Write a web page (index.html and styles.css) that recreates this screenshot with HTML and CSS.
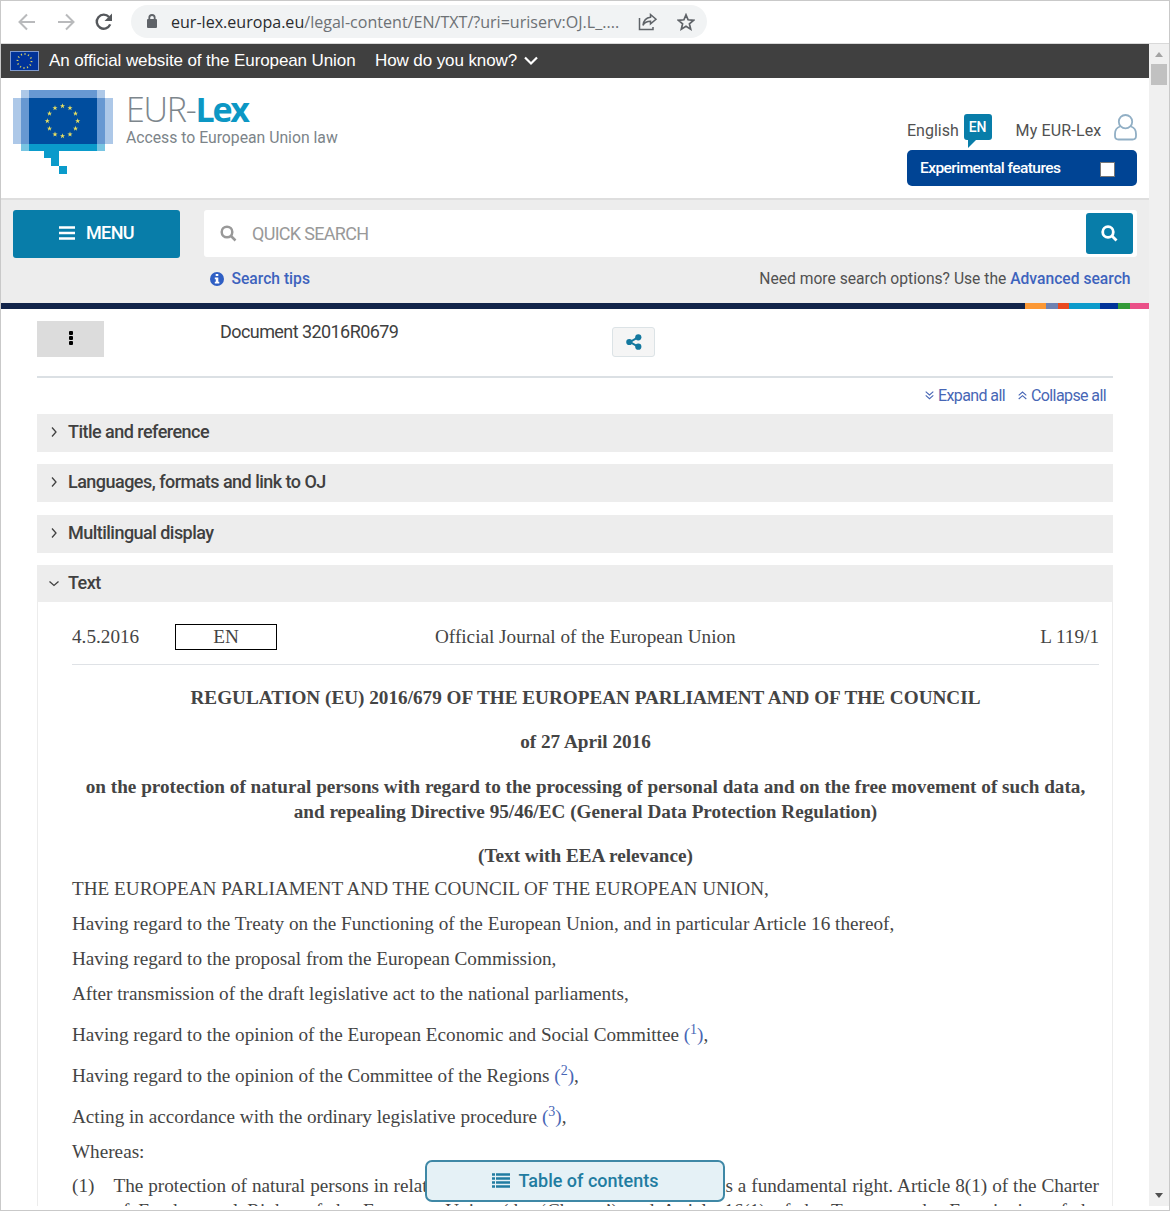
FILE: index.html
```html
<!DOCTYPE html>
<html lang="en">
<head>
<meta charset="utf-8">
<title>EUR-Lex - 32016R0679 - EN</title>
<link rel="stylesheet" href="styles.css">
</head>
<body>
<div class="window">
  <div class="toolbar">
    <svg class="nav back" width="20" height="20" viewBox="0 0 20 20"><path d="M18 10H3M10 2.500 2.500 10l7.500 7.500"/></svg>
    <svg class="nav fwd" width="20" height="20" viewBox="0 0 20 20"><path d="M2 10h15M10 2.500 17.500 10 10 17.500"/></svg>
    <svg class="reload" width="20" height="20" viewBox="0 0 20 20"><path class="arc" d="M16.200 12.400A7 7 0 1 1 15 5"/><path class="head" d="M18 1.500V9h-7.500z"/></svg>
    <div class="address">
      <svg class="lock" width="12" height="15" viewBox="0 0 12 15"><rect x="1" y="5" width="10" height="9" rx="1"/><path d="M3.300 6V3.700a2.700 2.700 0 0 1 5.400 0V6"/></svg>
      <span class="url"><b>eur-lex.europa.eu</b>/legal-content/EN/TXT/?uri=uriserv:OJ.L_....</span>
      <svg class="share-out" width="20" height="18" viewBox="0 0 20 18"><path d="M1.500 5v11.500h13.500v-2.500M12.500 1.500l5.500 4.700-5.500 4.700V8.300c-4 0-6 1.200-7.500 4 .5-4 3-7.500 7.500-8z"/></svg>
      <svg class="star" width="18" height="18" viewBox="0 0 18 18"><path d="M9 1.800l2.100 5 5.400.5-4.100 3.500 1.300 5.400L9 13.300l-4.700 2.900 1.300-5.400-4.100-3.500 5.400-.5z"/></svg>
    </div>
  </div>
  <div class="viewport">
    <div class="page">
      <div class="globan">
        <svg class="flag" width="29" height="20" viewBox="0 0 29 20"><rect x=".5" y=".5" width="28" height="19" fill="#039" stroke="#7f99cc"/><circle class="dots" cx="14.500" cy="10" r="7" pathLength="120"/></svg>
        <span class="official">An official website of the European Union</span>
        <span class="know">How do you know?</span>
        <svg class="chev" width="14" height="10" viewBox="0 0 14 10"><path d="M1 1.500 7 7.500l6-6"/></svg>
      </div>
      <header class="header">
        <svg class="logo" width="100" height="86" viewBox="0 0 100 86">
          <defs><path id="s" fill="#e9e060" d="M0-2.700.65-.85 2.600-.8 1.050.35 1.600 2.200 0 1.100-1.600 2.200-1.050.35-2.600-.8-.65-.85z"/></defs>
          <path fill="#adc8e8" d="M0 8h8v46H0zM92 8h8v46h-8zM8 0h8v8H8zM84 0h8v8h-8z"/>
          <path fill="#6798d2" d="M16 0h68v8H16zM8 8h8v46H8zM84 8h8v46h-8z"/>
          <path fill="#004d9e" d="M16 8h68v46H16z"/>
          <path fill="#0a9bcb" d="M15 54h69v7H46v15h-8v-8h-7v-7H15zM46 76h8v8h-8z"/>
          <path fill="#78c5e2" d="M8 54h8v7H8zM84 54h8v7h-8z"/>
          <use href="#s" x="49.500" y="16"/><use href="#s" x="57" y="18"/><use href="#s" x="62.500" y="23.500"/><use href="#s" x="64.700" y="31"/><use href="#s" x="62.500" y="38.500"/><use href="#s" x="57" y="44.300"/><use href="#s" x="49.500" y="46"/><use href="#s" x="42" y="44.300"/><use href="#s" x="36.500" y="38.500"/><use href="#s" x="34.300" y="31"/><use href="#s" x="36.500" y="23.500"/><use href="#s" x="42" y="18"/>
        </svg>
        <div class="brand">
          <div class="name">EUR-<b>Lex</b></div>
          <div class="tagline">Access to European Union law</div>
        </div>
        <div class="account">
          <div class="links">
            <span class="english">English</span>
            <span class="lang"><svg width="28" height="34" viewBox="0 0 28 34"><path d="M3 0h22a3 3 0 0 1 3 3v20a3 3 0 0 1-3 3H12l-8 8v-8H3a3 3 0 0 1-3-3V3a3 3 0 0 1 3-3z"/></svg><i>EN</i></span>
            <span class="my">My EUR-Lex</span>
            <svg class="user" width="23" height="27" viewBox="0 0 23 27"><circle cx="11.500" cy="7.700" r="6.700"/><path d="M6 12.500c-3.500 1-5 3.500-5 7.500v2c0 2.500 1 3.500 3.500 3.500h14c2.500 0 3.500-1 3.500-3.500v-2c0-4-1.500-6.500-5-7.500"/></svg>
          </div>
          <div class="experimental"><span>Experimental features</span><i class="check"></i></div>
        </div>
      </header>
      <section class="search">
        <div class="menu"><svg width="16" height="14" viewBox="0 0 16 14"><path d="M0 1.500h16M0 7h16M0 12.500h16"/></svg><span>MENU</span></div>
        <div class="search-col">
          <div class="field">
            <svg class="glass" width="17" height="17" viewBox="0 0 17 17"><circle cx="7" cy="7" r="5.300"/><path d="M11 11l4.500 4.500"/></svg>
            <span>QUICK SEARCH</span>
            <div class="go"><svg class="glass" width="17" height="17" viewBox="0 0 17 17"><circle cx="7" cy="7" r="5.300"/><path d="M11 11l4.500 4.500"/></svg></div>
          </div>
          <div class="hints">
            <svg width="14" height="14" viewBox="0 0 14 14"><circle cx="7" cy="7" r="7" fill="#2f5fc4"/><path fill="#fff" d="M5.700 2h2.600v2H5.700zM4.800 5.500h3.500v4.300h1V11.500H4.800V9.800h1V7.200h-1z"/></svg>
            <span class="tips">Search tips</span>
            <span class="need">Need more search options? Use the <b>Advanced search</b></span>
          </div>
        </div>
      </section>
      <div class="band"><i class="c1"></i><i class="c2"></i><i class="c3"></i><i class="c4"></i><i class="c5"></i><i class="c6"></i><i class="c7"></i></div>
      <main class="main">
        <div class="dochead">
          <div class="more"><i></i><i></i><i></i></div>
          <span class="docname">Document 32016R0679</span>
          <div class="share"><svg width="16" height="16" viewBox="0 0 16 16"><path d="M12 3.300 4 8l8 4.700"/><circle cx="3.300" cy="8" r="3.100"/><circle cx="12.300" cy="3.300" r="3.100"/><circle cx="12.300" cy="12.700" r="3.100"/></svg></div>
        </div>
        <div class="toggles">
          <svg width="9" height="9" viewBox="0 0 9 9"><path d="M.7.700 4.500 4 8.300.700M.7 4.400l3.800 3.300 3.800-3.300"/></svg><span class="exp">Expand all</span>
          <svg width="9" height="9" viewBox="0 0 9 9"><path d="M.7 4.300 4.500 1l3.800 3.300M.7 8l3.800-3.300L8.300 8"/></svg><span class="col">Collapse all</span>
        </div>
        <div class="panel"><svg width="12" height="12" viewBox="0 0 12 12"><path d="M4 1.500 8 6l-4 4.500"/></svg><span>Title and reference</span></div>
        <div class="panel"><svg width="12" height="12" viewBox="0 0 12 12"><path d="M4 1.500 8 6l-4 4.500"/></svg><span>Languages, formats and link to OJ</span></div>
        <div class="panel"><svg width="12" height="12" viewBox="0 0 12 12"><path d="M4 1.500 8 6l-4 4.500"/></svg><span>Multilingual display</span></div>
        <div class="panel open"><svg width="12" height="12" viewBox="0 0 12 12"><path d="M1.500 4.500 6 8.500l4.500-4"/></svg><span>Text</span></div>
        <article class="doc">
          <div class="oj"><span class="date">4.5.2016</span><span class="box">EN</span><span class="journal">Official Journal of the European Union</span><span class="num">L 119/1</span></div>
          <p class="t t1">REGULATION (EU) 2016/679 OF THE EUROPEAN PARLIAMENT AND OF THE COUNCIL</p>
          <p class="t t2">of 27 April 2016</p>
          <p class="t t3"><span>on the protection of natural persons with regard to the processing of personal data and on the free movement of such data,</span><br>and repealing Directive 95/46/EC (General Data Protection Regulation)</p>
          <p class="t t4">(Text with EEA relevance)</p>
          <p class="n n1">THE EUROPEAN PARLIAMENT AND THE COUNCIL OF THE EUROPEAN UNION,</p>
          <p class="n">Having regard to the Treaty on the Functioning of the European Union, and in particular Article 16 thereof,</p>
          <p class="n">Having regard to the proposal from the European Commission,</p>
          <p class="n">After transmission of the draft legislative act to the national parliaments,</p>
          <p class="n note">Having regard to the opinion of the European Economic and Social Committee <a>(<sup>1</sup>)</a>,</p>
          <p class="n note">Having regard to the opinion of the Committee of the Regions <a>(<sup>2</sup>)</a>,</p>
          <p class="n note">Acting in accordance with the ordinary legislative procedure <a>(<sup>3</sup>)</a>,</p>
          <p class="n">Whereas:</p>
          <div class="recital"><span class="no">(1)</span><p>The protection of natural persons in relation to the processing of personal data is a fundamental right. Article 8(1) of the Charter of Fundamental Rights of the European Union (the ‘Charter’) and Article 16(1) of the Treaty on the Functioning of the</p></div>
        </article>
      </main>
      <div class="toc"><svg width="18" height="15" viewBox="0 0 18 15"><path d="M0 1.500h3M4 1.500h14M0 5.500h3M4 5.500h14M0 9.500h3M4 9.500h14M0 13.500h3M4 13.500h14"/></svg><span>Table of contents</span></div>
    </div>
    <div class="scroll"><i class="up"></i><i class="thumb"></i><i class="down"></i></div>
  </div>
</div>
</body>
</html>
```
FILE: styles.css
```css
* { box-sizing: border-box; }
body { margin: 0; background: #fff; color: #404040; font-family: Roboto, sans-serif; }
svg { display: block; flex: none; }
i { font-style: normal; }
span { white-space: nowrap; }
.window { width: 1170px; height: 1211px; border: 1px solid #c9c9c9; overflow: hidden; }

.toolbar { height: 43px; display: flex; align-items: flex-start; padding: 6px 0 0 16px; border-bottom: 1px solid #d9d9d9; }
.nav { margin-top: 5px; fill: none; stroke: #b9babc; stroke-width: 2; }
.fwd { margin-left: 19px; }
.reload { margin: 5px 0 0 18px; }
.reload .arc { fill: none; stroke: #55585c; stroke-width: 2.400; }
.reload .head { fill: #55585c; }
.address { margin-left: 17px; margin-top: -2px; width: 576px; height: 33px; border-radius: 17px; background: #f1f3f4; display: flex; align-items: center; padding-left: 15px; }
.lock { fill: #5f6368; }
.lock path { fill: none; stroke: #5f6368; stroke-width: 1.800; }
.url { margin-left: 13px; width: 448px; font: 16.070px/34px "Open Sans", sans-serif; color: #6d7175; }
.url b { font-weight: 400; color: #2a2c2f; }
.share-out, .star { fill: none; stroke: #5f6368; stroke-width: 1.500; }
.share-out { margin-left: 19px; }
.star { margin-left: 19px; stroke-width: 1.700; }

.viewport { display: flex; height: 1162px; }
.page { width: 1148px; height: 1162px; overflow: hidden; position: relative; }
.scroll { width: 20px; background: #f0f0f0; display: flex; flex-direction: column; align-items: center; }
.scroll .up { margin-top: 8px; border: 4px solid transparent; border-top: 0; border-bottom: 5px solid #a3a3a3; }
.scroll .thumb { margin-top: 7px; width: 16px; height: 21px; background: #c1c1c1; }
.scroll .down { margin: auto 0 8px; border: 4px solid transparent; border-bottom: 0; border-top: 5px solid #505050; }

.globan { height: 34px; background: #404040; display: flex; align-items: center; padding-left: 9px; font: 17px/34px "Liberation Sans", sans-serif; letter-spacing: -.1px; color: #fff; }
.dots { fill: none; stroke: #d9d060; stroke-width: 1.800; stroke-dasharray: 3 7; }
.official { margin-left: 10px; width: 307px; }
.know { margin-left: 19px; width: 142px; }
.chev { margin-left: 7px; fill: none; stroke: #fff; stroke-width: 2.200; }

.header { height: 120px; display: flex; padding: 12px 12px 0; }
.logo { margin-left: -.5px; }
.brand { margin-left: 13.500px; }
.name { font: 300 34px/39px "Open Sans", sans-serif; letter-spacing: -1.250px; color: #7d868c; }
.name b { font-weight: 700; letter-spacing: -2.200px; color: #0c97c4; }
.tagline { font-size: 15.750px; line-height: 18px; color: #7c8489; }
.account { margin-left: auto; width: 230px; padding-top: 24px; }
.links { height: 36px; display: flex; align-items: flex-start; font-size: 16px; color: #515151; }
.english { line-height: 34px; width: 57px; }
.lang { width: 28px; position: relative; }
.lang path { fill: #087da9; }
.lang i { position: absolute; left: 0; top: 0; width: 28px; text-align: center; line-height: 26px; font-size: 14px; color: #fff; font-weight: 500; }
.my { margin-left: 24px; line-height: 34px; width: 87px; letter-spacing: .15px; }
.user { margin-left: 12px; fill: none; stroke: #91afc5; stroke-width: 1.800; }
.experimental { height: 36px; border-radius: 5px; background: #004494; display: flex; align-items: center; justify-content: space-between; padding: 0 22px 0 13px; color: #fff; font-size: 15.500px; letter-spacing: -.56px; font-weight: 500; }
.check { width: 15px; height: 15px; background: #fff; border: 1px solid #767676; margin-top: 3px; }

.search { height: 105px; background: #ededed; border-top: 2px solid #dedede; display: flex; padding: 10px 0 0 12px; }
.menu { width: 167px; height: 48px; border-radius: 3px; background: #087da9; color: #fff; display: flex; align-items: center; justify-content: center; gap: 11px; font-size: 18px; letter-spacing: -.6px; font-weight: 500; padding-bottom: 3px; }
.menu path { stroke: #fff; stroke-width: 2.600; }
.search-col { margin-left: 23.500px; width: 933px; }
.field { height: 47px; background: #fff; border-radius: 3px; display: flex; align-items: center; padding: 0 3.500px 0 16.500px; color: #999; font-size: 18px; letter-spacing: -.7px; }
.glass { fill: none; stroke: #999; stroke-width: 2.500; }
.field span { margin-left: 15px; }
.go { margin-left: auto; width: 47px; height: 41px; border-radius: 3px; background: #087da9; display: grid; place-items: center; }
.go .glass { stroke: #fff; stroke-width: 2.800; }
.hints { display: flex; align-items: center; height: 43px; padding-left: 6px; font-size: 15.650px; color: #515151; }
.tips { margin-left: 8px; font-weight: 500; color: #3d63bd; }
.need { margin-left: auto; margin-right: 6px; }
.need b { font-weight: 500; color: #3d63bd; }

.band { height: 6px; background: #12244a; display: flex; justify-content: flex-end; }
.c1 { width: 21px; background: #fc9834; }
.c2 { width: 12px; background: #6e82b2; }
.c3 { width: 11px; background: #ea4a1f; }
.c4 { width: 31px; background: #0c9bcb; }
.c5 { width: 18px; background: #003399; }
.c6 { width: 12px; background: #339a38; }
.c7 { width: 19px; background: #ea5088; }

.main { padding: 0 36px; }
.dochead { height: 69px; border-bottom: 2px solid #dbe0e4; padding-top: 12px; display: flex; align-items: flex-start; }
.more { width: 67px; height: 36px; background: #dcdcdc; display: flex; flex-direction: column; align-items: center; gap: 1px; padding-top: 10px; }
.more i { width: 4px; height: 4px; border-radius: 1px; background: #000; }
.docname { margin-left: 116px; width: 392px; font-size: 18px; line-height: 22px; letter-spacing: -.57px; }
.share { width: 43px; height: 30px; margin-top: 6px; border: 1px solid #dce3e6; border-radius: 3px; background: #f5f5f5; display: grid; place-items: center; }
.share svg { fill: #13789f; }
.share path { fill: none; stroke: #13789f; stroke-width: 2; }
.toggles { height: 36px; display: flex; align-items: center; justify-content: flex-end; padding: 0 7px 2px 0; font-size: 16px; letter-spacing: -.6px; color: #4766b5; }
.toggles path { fill: none; stroke: #4766b5; stroke-width: 1.100; }
.exp { margin: 0 13px 0 4px; }
.col { margin-left: 4px; }
.panel { height: 38px; margin-bottom: 12.300px; background: #ededed; display: flex; padding-left: 11px; font-size: 18px; letter-spacing: -.53px; line-height: 35px; font-weight: 500; }
.panel svg { margin: 12px 8px 0 0; fill: none; stroke: #404040; stroke-width: 1.300; }
.open { margin-bottom: 0; height: 37px; }

.doc { border: solid #ececec; border-width: 0 1px; padding: 15px 13px 0 34px; height: 640px; font: 19.200px/25px "Liberation Serif", serif; color: #444; }
.oj { height: 48px; border-bottom: 1px solid #dfe2e6; display: flex; padding-top: 7px; }
.date { width: 103px; }
.box { width: 102px; height: 26px; line-height: 24px; border: 1px solid #000; text-align: center; }
.journal { margin-left: 158px; }
.num { margin-left: auto; }
.doc p { margin: 0; }
.t { text-align: center; font-weight: 700; }
.doc .t1 { margin-top: 20px; }
.doc .t2, .doc .t3, .doc .t4 { margin-top: 19.500px; }
.doc .n { margin-top: 10px; white-space: nowrap; }
.doc .n1 { margin-top: 8px; }
.doc .note { margin-top: 15.800px; }
.n a { color: #4766b5; }
sup { font-size: 14px; line-height: 0; vertical-align: 7px; }
.recital { display: flex; margin-top: 9.500px; }
.no { width: 41.500px; flex: none; }
.recital p { text-align: justify; text-align-last: justify; }
.toc { position: absolute; left: 424px; top: 1116px; width: 300px; height: 42px; border: 2px solid #3f88a6; border-radius: 7px; background: #e5f1f6; display: flex; align-items: center; justify-content: center; gap: 9px; color: #217ca1; font-size: 18px; font-weight: 500; padding-bottom: 1px; }
.toc path { stroke: #217ca1; stroke-width: 2.700; }
```
